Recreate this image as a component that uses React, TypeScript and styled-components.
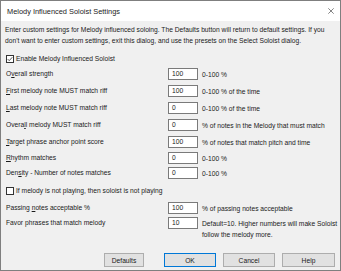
import { Fragment } from 'react'
import styled, { createGlobalStyle } from 'styled-components'

type Field = {
  pre: string
  key: string
  post: string
  value: string
  desc: string
  gap: number
}

const fieldsTop: Field[] = [
  { pre: 'O', key: 'v', post: 'erall strength', value: '100', desc: '0-100 %', gap: 4 },
  { pre: '', key: 'F', post: 'irst melody note MUST match riff', value: '100', desc: '0-100 % of the time', gap: 5 },
  { pre: '', key: 'L', post: 'ast melody note MUST match riff', value: '0', desc: '0-100 % of the time', gap: 5 },
  { pre: 'Overa', key: 'l', post: 'l melody MUST match riff', value: '0', desc: '% of notes in the Melody that must match', gap: 5 },
  { pre: '', key: 'T', post: 'arget phrase anchor point score', value: '100', desc: '% of notes that match pitch and time', gap: 5 },
  { pre: '', key: 'R', post: 'hythm matches', value: '0', desc: '0-100 %', gap: 4 },
  { pre: 'Den', key: 's', post: 'ity - Number of notes matches', value: '0', desc: '0-100 %', gap: 3 },
]

const fieldsBottom: Field[] = [
  { pre: 'Passing ', key: 'n', post: 'otes acceptable %', value: '100', desc: '% of passing notes acceptable', gap: 6 },
  {
    pre: 'Favor phrases that match melody',
    key: '',
    post: '',
    value: '10',
    desc: 'Default=10. Higher numbers will make Soloist follow the melody more.',
    gap: 3,
  },
]

const GlobalStyle = createGlobalStyle`
  html, body {
    margin: 0;
    padding: 0;
    background: #ffffff;
  }
  body {
    font-family: "Liberation Sans", Arial, sans-serif;
    color: #1a1a1a;
  }
`

const Window = styled.div`
  width: 341px;
  height: 271px;
  box-sizing: border-box;
  border: 1px solid #7f7f7f;
  display: flex;
  flex-direction: column;
  background: #f0f0f0;
`

const TitleBar = styled.div`
  height: 20px;
  flex-shrink: 0;
  background: #ffffff;
  display: flex;
  align-items: center;
  justify-content: space-between;
  padding: 0 5px 0 6px;
`

const Title = styled.span`
  font-size: 7.4px;
  color: #222;
`

const CloseIcon = styled.svg`
  width: 6px;
  height: 6px;
  margin-right: 1px;
`

const Body = styled.div`
  flex: 1;
  display: flex;
  flex-direction: column;
  padding: 3px 4px 3px 4px;
  font-size: 6.7px;
`

const Intro = styled.p`
  margin: 0;
  line-height: 11px;
  white-space: nowrap;
`

const CheckRow = styled.label<{ $gap: number }>`
  display: flex;
  align-items: center;
  gap: 2px;
  height: 11px;
  margin-top: ${(p) => p.$gap}px;
  margin-left: 1px;
`

const Box = styled.span`
  width: 8px;
  height: 8px;
  box-sizing: border-box;
  border: 1px solid #333;
  background: #fff;
  display: flex;
  align-items: center;
  justify-content: center;
`

const FieldRow = styled.div<{ $gap: number }>`
  display: grid;
  grid-template-columns: 159px 30px 137px;
  column-gap: 4px;
  align-items: start;
  margin-top: ${(p) => p.$gap}px;
  line-height: 12px;
`

const Label = styled.span`
  padding-left: 1px;
  white-space: nowrap;
`

const Input = styled.div`
  height: 12px;
  box-sizing: border-box;
  border: 1px solid #7a7a7a;
  background: #fff;
  padding-left: 3px;
  line-height: 10px;
`

const Desc = styled.span`
  line-height: 11px;
  padding-top: 1px;
`

const Footer = styled.div`
  margin-top: auto;
  display: flex;
  justify-content: flex-end;
  gap: 7px;
  padding-right: 1px;
`

const Button = styled.button<{ $primary?: boolean; $width: number }>`
  width: ${(p) => p.$width}px;
  height: 14px;
  box-sizing: border-box;
  padding: 0;
  background: #e1e1e1;
  border: 1px solid ${(p) => (p.$primary ? '#0078d7' : '#adadad')};
  font-family: "Liberation Sans", Arial, sans-serif;
  font-size: 6.7px;
  color: #1a1a1a;

  &.defaults {
    margin-right: 13px;
  }
`

const Check = () => (
  <svg width="7" height="6" viewBox="0 0 7 6">
    <path d="M0.8 3.1 L2.6 4.9 L6.2 0.9" stroke="#222" strokeWidth="0.9" fill="none" />
  </svg>
)

const renderField = (f: Field) => (
  <FieldRow key={f.pre + f.key + f.post} $gap={f.gap}>
    <Label>
      {f.pre}
      {f.key && <u>{f.key}</u>}
      {f.post}
    </Label>
    <Input>{f.value}</Input>
    <Desc>{f.desc}</Desc>
  </FieldRow>
)

export default function App() {
  return (
    <Fragment>
      <GlobalStyle />
      <Window>
        <TitleBar>
          <Title>Melody Influenced Soloist Settings</Title>
          <CloseIcon viewBox="0 0 10 10">
            <path d="M0.5 0.5 L9.5 9.5 M9.5 0.5 L0.5 9.5" stroke="#333" strokeWidth="1" />
          </CloseIcon>
        </TitleBar>
        <Body>
          <Intro>
            Enter custom settings for Melody influenced soloing. The Defaults button will return to default settings. If you
            <br />
            don&apos;t want to enter custom settings, exit this dialog, and use the presets on the Select Soloist dialog.
          </Intro>
          <CheckRow $gap={7}>
            <Box>
              <Check />
            </Box>
            Enable Melody Influenced Soloist
          </CheckRow>
          {fieldsTop.map(renderField)}
          <CheckRow $gap={6}>
            <Box />
            If melody is not playing, then soloist is not playing
          </CheckRow>
          {fieldsBottom.map(renderField)}
          <Footer>
            <Button className="defaults" $width={40}>
              Defaults
            </Button>
            <Button $primary $width={52}>
              OK
            </Button>
            <Button $width={52}>Cancel</Button>
            <Button $width={53}>Help</Button>
          </Footer>
        </Body>
      </Window>
    </Fragment>
  )
}
